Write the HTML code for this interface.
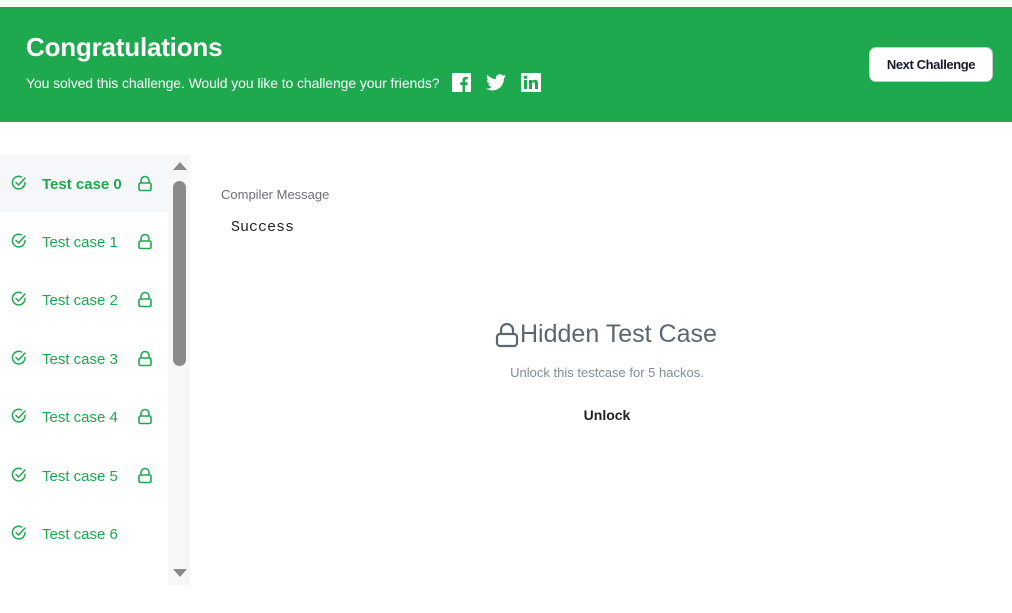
<!DOCTYPE html>
<html><head><style>
body{margin:0;width:1012px;height:613px;background:#fff;font-family:"Liberation Sans",sans-serif;position:relative;overflow:hidden}
.band{position:absolute;left:0;top:7px;width:1012px;height:115px;background:#1ea94e}
.h1{position:absolute;left:26px;top:32px;color:#fff;font-size:26px;font-weight:bold;letter-spacing:-0.2px}
.sub{position:absolute;left:26px;top:75px;color:#fff;font-size:14px;letter-spacing:-0.1px}
.btn{position:absolute;left:869px;top:47px;width:124px;height:35px;background:#fff;border:1px solid #ccc;border-radius:7px;box-sizing:border-box;font-size:13px;font-weight:bold;color:#1a1a2e;text-align:center;line-height:34px;letter-spacing:-0.4px}
.item{position:absolute;left:0;width:168px;height:58px;color:#1ea94e;font-size:15px}
.item .t{position:absolute;left:42px;top:21px}
.item svg{position:absolute}
.track{position:absolute;left:168px;top:155px;width:22px;height:430px;background:#f7f7f7}
.thumb{position:absolute;left:173px;top:181px;width:13px;height:185px;background:#8a8a8a;border-radius:7px}
</style></head><body>
<div class="band"></div>
<div class="h1">Congratulations</div>
<div class="sub">You solved this challenge. Would you like to challenge your friends?</div>
<svg style="position:absolute;left:452px;top:73px" width="19" height="19"><rect width="19" height="19" rx="1" fill="#fff"/><path d="M13 19v-7h2.3l.4-2.7H13V7.7c0-.8.3-1.3 1.4-1.3h1.4V4c-.3 0-1.1-.1-2-.1-2 0-3.3 1.2-3.3 3.4v2H8.2V12h2.3v7z" fill="#1ea94e"/></svg>
<svg style="position:absolute;left:486px;top:74px" width="20" height="17" viewBox="0 0 24 20"><path d="M24 2.4c-.9.4-1.8.7-2.8.8 1-.6 1.8-1.6 2.2-2.7-1 .6-2 1-3.1 1.2A4.9 4.9 0 0 0 11.9 6 14 14 0 0 1 1.7.9a4.9 4.9 0 0 0 1.5 6.6c-.8 0-1.6-.3-2.2-.6 0 2.4 1.7 4.4 3.9 4.8-.7.2-1.5.2-2.2.1.6 2 2.4 3.4 4.6 3.4A9.9 9.9 0 0 1 0 17.3 14 14 0 0 0 7.5 19.5c9 0 14-7.5 14-14v-.6c1-.7 1.8-1.6 2.5-2.5z" fill="#fff"/></svg>
<svg style="position:absolute;left:521px;top:73px" width="20" height="19"><rect width="20" height="19" rx="1" fill="#fff"/><rect x="3" y="7" width="3" height="9" fill="#1ea94e"/><circle cx="4.5" cy="4.2" r="1.7" fill="#1ea94e"/><path d="M8 7h3v1.3c.5-.9 1.6-1.5 2.9-1.5 2.3 0 3.1 1.4 3.1 3.8V16h-3v-5c0-1.1-.3-1.8-1.3-1.8S11 9.9 11 11v5H8z" fill="#1ea94e"/></svg>
<div class="btn">Next Challenge</div>

<div style="position:absolute;left:0;top:155px;width:168px;height:57px;background:#f5f7fb"></div>
<div class="track"></div>
<div class="thumb"></div>
<svg style="position:absolute;left:172px;top:160px" width="16" height="12"><path d="M1 10L8 2l7 8z" fill="#8a8a8a"/></svg>
<svg style="position:absolute;left:172px;top:567px" width="16" height="12"><path d="M1 2h14l-7 8z" fill="#8a8a8a"/></svg>

<div id="items"></div>
<script>
var ys=[155,213,271,330,388,447,505];var h='';
for(var i=0;i<7;i++){
h+='<div class="item" style="top:'+ys[i]+'px"><svg style="left:11px;top:20px" width="16" height="16" viewBox="0 0 16 16"><path d="M14 7.5A6.3 6.3 0 1 1 10.5 2" fill="none" stroke="#1ea94e" stroke-width="1.5" stroke-linecap="round"/><path d="M5 7.5l2.5 2.5L14 3" fill="none" stroke="#1ea94e" stroke-width="1.5" stroke-linecap="round" stroke-linejoin="round"/></svg><span class="t" style="'+(i==0?'font-weight:bold':'')+'">Test case '+i+'</span>'+(i<6?'<svg style="left:137px;top:20px" width="16" height="17" viewBox="0 0 16 17"><path d="M4 8V5.5a4 4 0 0 1 8 0V8" fill="none" stroke="#1ea94e" stroke-width="1.6"/><rect x="2" y="8" width="12" height="7.5" rx="1.5" fill="none" stroke="#1ea94e" stroke-width="1.6"/></svg>':'')+'</div>';}
document.getElementById('items').innerHTML=h;
</script>

<div style="position:absolute;left:221px;top:187px;font-size:13px;color:#6a6f76">Compiler Message</div>
<div style="position:absolute;left:231px;top:219px;font-family:'Liberation Mono',monospace;font-size:15px;color:#222">Success</div>
<svg style="position:absolute;left:495px;top:322px" width="24" height="26" viewBox="0 0 24 26"><path d="M6 12V8a6 6 0 0 1 12 0v4" fill="none" stroke="#5b6770" stroke-width="2.2"/><rect x="2" y="12" width="20" height="12" rx="3" fill="none" stroke="#5b6770" stroke-width="2.2"/></svg>
<div style="position:absolute;left:520px;top:320px;font-size:25px;color:#5b6770">Hidden Test Case</div>
<div style="position:absolute;left:0;width:1214px;text-align:center;top:365px;font-size:13px;color:#7d8f98">Unlock this testcase for 5 hackos.</div>
<div style="position:absolute;left:0;width:1214px;text-align:center;top:407px;font-size:14px;font-weight:bold;color:#222">Unlock</div>
</body></html>
